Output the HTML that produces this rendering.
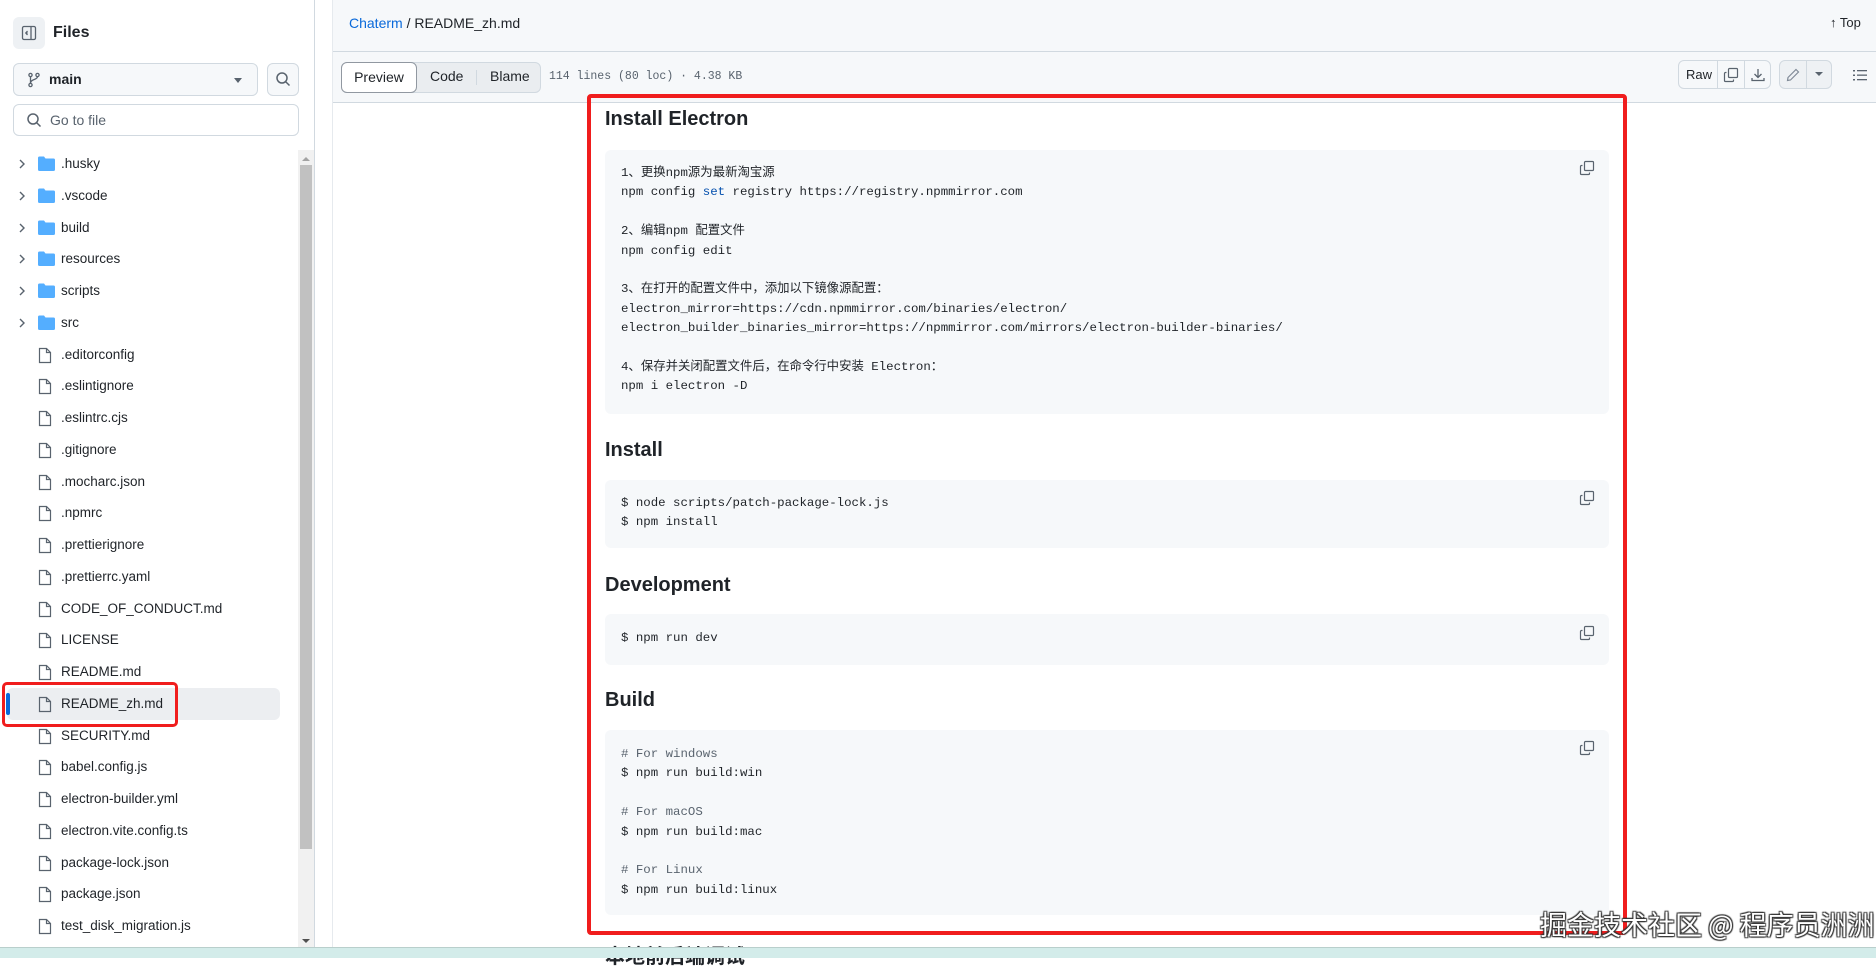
<!DOCTYPE html>
<html><head><meta charset="utf-8"><style>
*{box-sizing:border-box;margin:0;padding:0}
body{width:1876px;height:958px;overflow:hidden;background:#fff;font-family:"Liberation Sans","Noto Sans CJK SC",sans-serif;color:#1f2328;position:relative}
.abs{position:absolute}
.side{left:0;top:0;width:315px;height:958px;border-right:1px solid #d1d9e0}
.item{position:absolute;left:0;height:30px;font-size:13.5px;line-height:30px;color:#1f2328}
.item .t{position:absolute;left:61px;top:0}
.item .ic{position:absolute;left:38px;top:7px}
.item .ch{position:absolute;left:17px;top:9px}
.code{position:absolute;left:605px;width:1004px;background:#f6f8fa;border-radius:6px;font-family:"Liberation Mono","Noto Sans CJK SC",monospace;font-size:12.4px;line-height:19.4px;color:#1f2328;padding:0 0 0 16px;white-space:pre}
h3{position:absolute;left:605px;font-size:20px;font-weight:bold;color:#1f2328}
.cp{position:absolute;left:1579px}
.btn{border:1px solid #d1d9e0;border-radius:6px;background:#f6f8fa}
</style></head><body>
<div class="abs side">
  <div class="abs" style="left:13px;top:17px;width:32px;height:32px;border-radius:6px;background:#eef1f4"></div>
  <svg class="abs" style="left:21px;top:25px" width="16" height="16" viewBox="0 0 16 16" fill="none" stroke="#59636e" stroke-width="1.3"><rect x="1.5" y="1.5" width="13" height="13" rx="1.5"/><line x1="10" y1="1.5" x2="10" y2="14.5"/><path d="M6.5 6 L4.8 8 L6.5 10" fill="#59636e"/></svg>
  <div class="abs" style="left:53px;top:24px;font-size:16px;font-weight:bold">Files</div>
  <div class="abs btn" style="left:13px;top:63px;width:245px;height:33px"></div>
  <svg class="abs" style="left:27px;top:72px" width="14" height="16" viewBox="0 0 14 16" fill="none" stroke="#59636e" stroke-width="1.3"><circle cx="3.5" cy="3" r="1.6"/><circle cx="3.5" cy="13" r="1.6"/><circle cx="10.5" cy="3" r="1.6"/><line x1="3.5" y1="4.6" x2="3.5" y2="11.4"/><path d="M10.5 4.6 C10.5 8 3.5 7 3.5 11"/></svg>
  <div class="abs" style="left:49px;top:71px;font-size:14px;font-weight:bold">main</div>
  <div class="abs" style="left:234px;top:78px;border:4px solid transparent;border-top:5px solid #59636e"></div>
  <div class="abs btn" style="left:267px;top:63px;width:32px;height:33px"></div>
  <svg class="abs" style="left:275px;top:71px" width="16" height="16" viewBox="0 0 16 16" fill="none" stroke="#59636e" stroke-width="1.5"><circle cx="7" cy="7" r="5"/><line x1="10.6" y1="10.6" x2="14.5" y2="14.5"/></svg>
  <div class="abs" style="left:13px;top:104px;width:286px;height:32px;border:1px solid #d1d9e0;border-radius:6px"></div>
  <svg class="abs" style="left:26px;top:112px" width="16" height="16" viewBox="0 0 16 16" fill="none" stroke="#59636e" stroke-width="1.5"><circle cx="7" cy="7" r="5"/><line x1="10.6" y1="10.6" x2="14.5" y2="14.5"/></svg>
  <div class="abs" style="left:50px;top:112px;font-size:14px;color:#59636e">Go to file</div>
  <div class="abs" style="left:298px;top:150px;width:16px;height:798px;background:#f1f1f1"></div>
  <div class="abs" style="left:300px;top:165px;width:12px;height:684px;background:#c1c1c1"></div>
  <div class="abs" style="left:302px;top:157px;border:4px solid transparent;border-bottom:4px solid #a3a3a3;border-top:0"></div>
  <div class="abs" style="left:302px;top:939px;border:4px solid transparent;border-top:4px solid #505050;border-bottom:0"></div>
  <div class="abs" style="left:7px;top:688px;width:273px;height:32px;background:#eceef1;border-radius:6px"></div>
  <div class="abs" style="left:6px;top:693px;width:4px;height:22px;background:#0969da;border-radius:2px"></div>
  <div id="tree"></div>
  <div class="abs" style="left:2px;top:682px;width:176px;height:45px;border:3.5px solid #f01d1d;border-radius:5px"></div>
</div>
<div class="abs" style="left:316px;top:0;width:17px;height:948px;background:#fff;border-right:1px solid #e6eaee"></div>
<div class="abs" style="left:333px;top:0;width:1543px;height:52px;background:#f6f8fa;border-bottom:1px solid #d1d9e0"></div>
<div class="abs" style="left:349px;top:15px;font-size:14px"><span style="color:#0969da">Chaterm</span> / README_zh.md</div>
<div class="abs" style="left:1830px;top:15px;font-size:13px">↑ Top</div>
<div class="abs" style="left:333px;top:52px;width:1543px;height:51px;background:#f6f8fa;border-bottom:1px solid #d1d9e0"></div>
<div class="abs" style="left:341px;top:62px;width:200px;height:31px;background:#eaedf0;border-radius:6px;border:1px solid #d1d9e0"></div>
<div class="abs" style="left:341px;top:62px;width:76px;height:31px;background:#fff;border-radius:6px;border:1px solid #9198a1;font-size:14px;line-height:29px;text-align:center">Preview</div>
<div class="abs" style="left:430px;top:68px;font-size:14px">Code</div>
<div class="abs" style="left:476px;top:70px;width:1px;height:15px;background:#d1d9e0"></div>
<div class="abs" style="left:490px;top:68px;font-size:14px">Blame</div>
<div class="abs" style="left:549px;top:70px;font-size:11.5px;font-family:'Liberation Mono',monospace;color:#59636e">114 lines (80 loc) · 4.38 KB</div>
<div class="abs btn" style="left:1678px;top:60px;width:93px;height:29px;background:#f6f8fa"></div>
<div class="abs" style="left:1686px;top:67px;font-size:13px">Raw</div>
<div class="abs" style="left:1717px;top:60px;width:1px;height:29px;background:#d1d9e0"></div>
<div class="abs" style="left:1744px;top:60px;width:1px;height:29px;background:#d1d9e0"></div>
<svg class="abs" style="left:1723px;top:67px" width="16" height="16" viewBox="0 0 16 16" fill="none" stroke="#59636e" stroke-width="1.2"><rect x="5.5" y="1.5" width="9" height="9" rx="1"/><path d="M3.5 5.5 H2.5 a1 1 0 0 0 -1 1 V13.5 a1 1 0 0 0 1 1 H9.5 a1 1 0 0 0 1 -1 V12.5"/></svg>
<svg class="abs" style="left:1750px;top:67px" width="16" height="16" viewBox="0 0 16 16" fill="none" stroke="#59636e" stroke-width="1.3"><path d="M8 2 V10 M4.5 7 L8 10.5 L11.5 7 M2 11 V13.5 H14 V11"/></svg>
<div class="abs btn" style="left:1779px;top:60px;width:53px;height:29px;background:#eef1f4"></div>
<div class="abs" style="left:1806px;top:60px;width:1px;height:29px;background:#d1d9e0"></div>
<svg class="abs" style="left:1785px;top:67px" width="16" height="16" viewBox="0 0 16 16" fill="none" stroke="#818b98" stroke-width="1.2"><path d="M11 2.5 L13.5 5 L5.5 13 L2.5 13.5 L3 10.5 Z"/></svg>
<div class="abs" style="left:1815px;top:72px;border:4px solid transparent;border-top:4px solid #59636e"></div>
<svg class="abs" style="left:1852px;top:67px" width="16" height="16" viewBox="0 0 16 16" fill="#59636e"><rect x="1" y="3" width="2" height="1.5"/><rect x="5" y="3" width="10" height="1.3"/><rect x="1" y="7.5" width="2" height="1.5"/><rect x="5" y="7.5" width="10" height="1.3"/><rect x="1" y="12" width="2" height="1.5"/><rect x="5" y="12" width="10" height="1.3"/></svg>

<h3 style="top:108px">Install Electron</h3>
<div class="code" style="top:150px;height:264px;padding-top:14px">1、更换npm源为最新淘宝源
npm config <span style="color:#0550ae">set</span> registry https://registry.npmmirror.com

2、编辑npm 配置文件
npm config edit

3、在打开的配置文件中，添加以下镜像源配置：
electron_mirror=https://cdn.npmmirror.com/binaries/electron/
electron_builder_binaries_mirror=https://npmmirror.com/mirrors/electron-builder-binaries/

4、保存并关闭配置文件后，在命令行中安装 Electron：
npm i electron -D</div>
<h3 style="top:439px">Install</h3>
<div class="code" style="top:480px;height:68px;padding-top:14px">$ node scripts/patch-package-lock.js
$ npm install</div>
<h3 style="top:574px">Development</h3>
<div class="code" style="top:614px;height:51px;padding-top:15px">$ npm run dev</div>
<h3 style="top:689px">Build</h3>
<div class="code" style="top:730px;height:185px;padding-top:15px"><span style="color:#59636e"># For windows</span>
$ npm run build:win

<span style="color:#59636e"># For macOS</span>
$ npm run build:mac

<span style="color:#59636e"># For Linux</span>
$ npm run build:linux</div>
<h3 style="top:940px">本地前后端调试</h3>
<div id="cps"></div>
<div class="abs" style="left:587px;top:94px;width:1040px;height:841px;border:4px solid #f01d1d;border-radius:4px"></div>
<div class="abs" style="left:0;top:947px;width:1876px;height:11px;background:#d3ecea;border-top:1px solid #b9cfcc"></div>
<div class="abs" style="left:1540px;top:904px;font-size:27px;color:#fff;text-shadow:1px 1px 1px #333,-1px -1px 1px #333,1px -1px 1px #333,-1px 1px 1px #333;font-family:'Noto Sans CJK SC',sans-serif">掘金技术社区 @ 程序员洲洲</div>
<script>
var items=[["d",".husky"],["d",".vscode"],["d","build"],["d","resources"],["d","scripts"],["d","src"],["f",".editorconfig"],["f",".eslintignore"],["f",".eslintrc.cjs"],["f",".gitignore"],["f",".mocharc.json"],["f",".npmrc"],["f",".prettierignore"],["f",".prettierrc.yaml"],["f","CODE_OF_CONDUCT.md"],["f","LICENSE"],["f","README.md"],["f","README_zh.md"],["f","SECURITY.md"],["f","babel.config.js"],["f","electron-builder.yml"],["f","electron.vite.config.ts"],["f","package-lock.json"],["f","package.json"],["f","test_disk_migration.js"]];
var h="";items.forEach(function(it,i){var y=149+i*31.75;
h+='<div class="item" style="top:'+y+'px;width:280px">';
if(it[0]=="d"){h+='<svg class="ch" width="10" height="12" viewBox="0 0 10 12" fill="none" stroke="#59636e" stroke-width="1.4"><path d="M3 2 L7 6 L3 10"/></svg><svg class="ic" width="17" height="15" viewBox="0 0 17 15"><path d="M0 2 a1.5 1.5 0 0 1 1.5 -1.5 H6 L7.5 2.5 H15.5 a1.5 1.5 0 0 1 1.5 1.5 V13.5 a1.5 1.5 0 0 1 -1.5 1.5 H1.5 a1.5 1.5 0 0 1 -1.5 -1.5Z" fill="#54aeff"/></svg>';}
else{h+='<svg class="ic" width="14" height="17" viewBox="0 0 14 17" fill="none" stroke="#59636e" stroke-width="1.2"><path d="M1.5 1.5 H8.5 L12.5 5.5 V15.5 H1.5 Z M8.5 1.5 V5.5 H12.5"/></svg>';}
h+='<span class="t">'+it[1]+'</span></div>';});
document.getElementById("tree").innerHTML=h;
var c="";[160,490,625,740].forEach(function(y){c+='<svg class="cp" style="top:'+y+'px" width="16" height="16" viewBox="0 0 16 16" fill="none" stroke="#59636e" stroke-width="1.2"><rect x="5.5" y="1.5" width="9" height="9" rx="1"/><path d="M3.5 5.5 H2.5 a1 1 0 0 0 -1 1 V13.5 a1 1 0 0 0 1 1 H9.5 a1 1 0 0 0 1 -1 V12.5"/></svg>';});
document.getElementById("cps").innerHTML=c;
</script>
</body></html>
